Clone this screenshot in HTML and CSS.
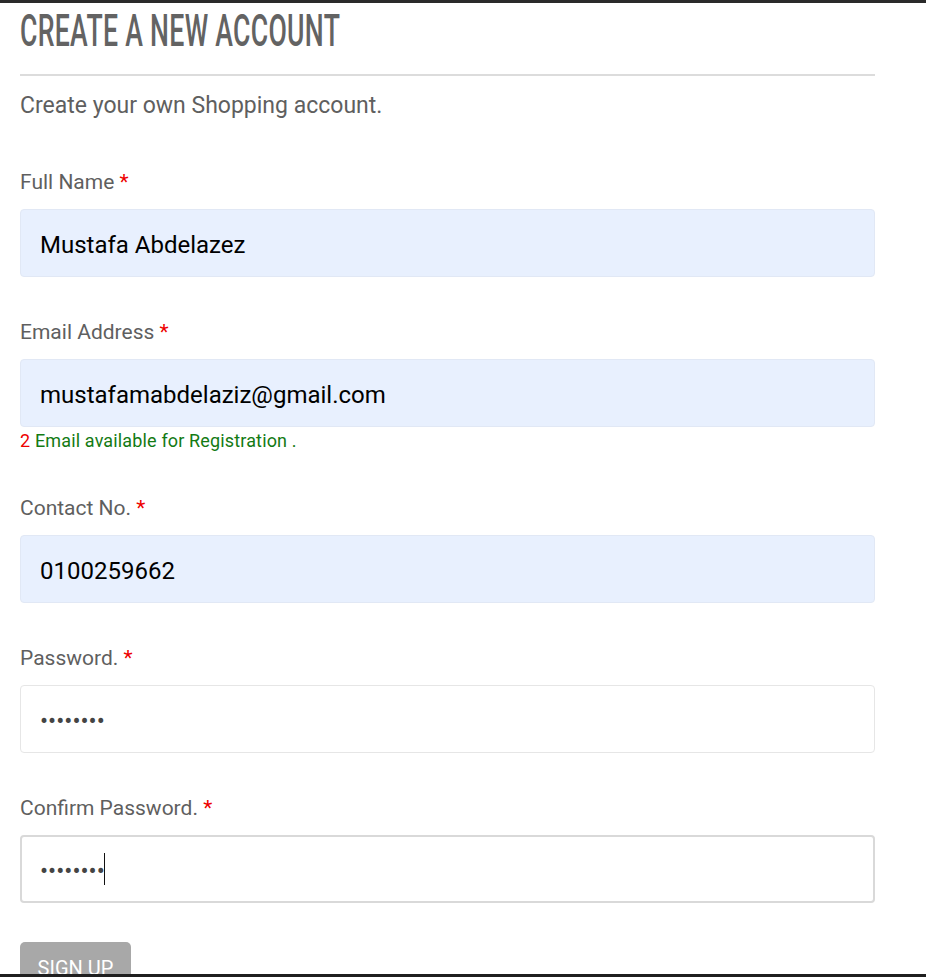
FILE: index.html
```html
<!DOCTYPE html>
<html lang="en">
<head>
<meta charset="utf-8">
<title>Create a new account</title>
<link rel="stylesheet" href="styles.css">
</head>
<body>
<div class="topbar"></div>
<main class="page">
  <h1 class="title"><span class="title-text">CREATE A NEW ACCOUNT</span></h1>
  <hr class="rule">
  <p class="intro">Create your own Shopping account.</p>
  <form class="form">
    <div class="field">
      <label class="label" for="fullname">Full Name <span class="req">*</span></label>
      <input class="input filled" id="fullname" type="text" value="Mustafa Abdelazez">
    </div>
    <div class="field">
      <label class="label" for="email">Email Address <span class="req">*</span></label>
      <input class="input filled" id="email" type="text" value="mustafamabdelaziz@gmail.com">
      <div class="status"><span class="status-num">2</span> Email available for Registration .</div>
    </div>
    <div class="field">
      <label class="label" for="contact">Contact No. <span class="req">*</span></label>
      <input class="input filled" id="contact" type="text" value="0100259662">
    </div>
    <div class="field">
      <label class="label" for="password">Password. <span class="req">*</span></label>
      <input class="input plain" id="password" type="password" value="12345678">
    </div>
    <div class="field">
      <label class="label" for="confirm">Confirm Password. <span class="req">*</span></label>
      <div class="input-wrap">
        <input class="input focused" id="confirm" type="password" value="12345678">
        <span class="caret"></span>
      </div>
    </div>
    <button class="btn" type="button">SIGN UP</button>
  </form>
</main>
<div class="bottombar"></div>
</body>
</html>
```
FILE: styles.css
```css
* { box-sizing: border-box; }
html, body { margin: 0; padding: 0; background: #fff; }
body {
  font-family: Roboto, "Liberation Sans", sans-serif;
  color: #5f5f5f;
  height: 977px;
  overflow: hidden;
}
.topbar { height: 3px; background: #2a2a2a; }
.bottombar {
  position: fixed; left: 0; right: 0; bottom: 0;
  height: 3px; background: #1f1f1f;
}
.page { padding-left: 20px; width: 875px; }
.title {
  margin: 0;
  height: 50px;
  padding-top: 5px;
  font-weight: 500;
  font-size: 45px;
  line-height: 46px;
  color: #636363;
  white-space: nowrap;
}
.title-text {
  display: inline-block;
  transform: scaleX(0.592);
  transform-origin: left center;
  letter-spacing: 0.5px;
}
.rule {
  margin: 21px 0 0 0;
  border: 0;
  height: 2px;
  background: #dcdcdc;
  width: 855px;
}
.intro {
  margin: 18px 0 0 0;
  font-size: 23px;
  line-height: 24px;
}
.form { margin-top: 51px; display: flex; flex-direction: column; }
.field { display: flex; flex-direction: column; margin-bottom: 42px; }
.label {
  font-size: 21px;
  line-height: 26px;
  margin-bottom: 14px;
}
.req { color: #e00; }
.input {
  width: 855px;
  height: 68px;
  border-radius: 4px;
  padding: 3px 19px 0 19px;
  font-family: Roboto, "Liberation Sans", sans-serif;
  font-size: 24px;
  color: #000;
  outline: none;
}
.filled { background: #e8f0fe; border: 1px solid #e1e8f5; }
.plain { background: #fff; border: 1px solid #e6e6e6; color: #444; }
.focused { background: #fff; border: 2px solid #d9d9d9; color: #444; padding-left: 18px; }
.status {
  margin-top: 4px;
  margin-bottom: 2px;
  font-size: 18px;
  line-height: 20px;
  letter-spacing: 0.15px;
  color: #137a13;
}
.status-num { color: #e00; }
.input-wrap { position: relative; }
.caret {
  position: absolute;
  left: 84px;
  top: 18px;
  width: 1px;
  height: 32px;
  background: #111;
}
.btn {
  align-self: flex-start;
  margin-top: -3px;
  width: 111px;
  height: 50px;
  border: 0;
  border-radius: 5px;
  background: #a8a8a8;
  color: #fff;
  font-family: Roboto, "Liberation Sans", sans-serif;
  font-size: 20px;
  padding: 12px 0 0 0;
  line-height: 28px;
  display: flex;
  align-items: flex-start;
  justify-content: center;
}
```
